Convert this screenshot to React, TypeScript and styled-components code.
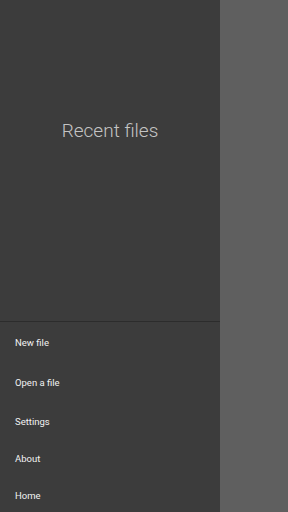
import styled, { createGlobalStyle } from 'styled-components';

const GlobalStyle = createGlobalStyle`
    html, body {
        margin: 0;
        padding: 0;
        height: 100%;
        overflow: hidden;
    }
    #root {
        height: 100%;
    }
`;

const menuItems = [
    { label: 'New file', height: 40 },
    { label: 'Open a file', height: 40 },
    { label: 'Settings', height: 38 },
    { label: 'About', height: 37 },
    { label: 'Home', height: 36 },
];

const App = () =>
    <Screen>
        <GlobalStyle />
        <Drawer>
            <Header>
                <Title>Recent files</Title>
            </Header>
            <MenuList>
                {menuItems.map(item =>
                    <MenuItem key={item.label} $height={item.height}>
                        {item.label}
                    </MenuItem>
                )}
            </MenuList>
        </Drawer>
        <Scrim />
    </Screen>;

const Screen = styled.div`
    display: flex;
    width: 288px;
    height: 512px;
    overflow: hidden;
    font-family: Roboto, "Noto Sans", sans-serif;
`;

const Drawer = styled.div`
    width: 220px;
    flex-shrink: 0;
    display: flex;
    flex-direction: column;
    background-color: #3c3c3c;
`;

const Header = styled.div`
    height: 322px;
    flex-shrink: 0;
    box-sizing: border-box;
    padding-top: 120px;
    border-bottom: 1px solid #2c2c2c;
    text-align: center;
`;

const Title = styled.div`
    font-size: 19px;
    line-height: 22px;
    font-weight: 300;
    color: #c4c4c4;
`;

const MenuList = styled.div`
    display: flex;
    flex-direction: column;
`;

const MenuItem = styled.div<{ $height: number }>`
    height: ${p => p.$height}px;
    flex-shrink: 0;
    display: flex;
    align-items: center;
    padding-left: 15px;
    font-size: 9.5px;
    color: #f2f2f2;
`;

const Scrim = styled.div`
    flex: 1;
    background-color: #5f5f5f;
`;

export default App;
